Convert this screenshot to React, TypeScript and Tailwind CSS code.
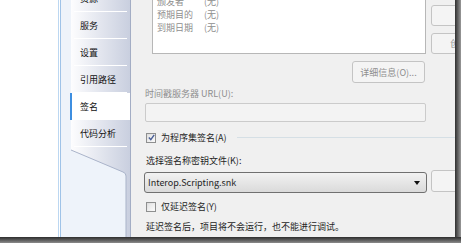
import React from "react";

function CheckBox({ checked }: { checked?: boolean }) {
  return (
    <div className="w-[10px] h-[10px] shrink-0 border border-[#8e8f8f] bg-gradient-to-br from-[#dcdcdc] to-[#fbfbfb] p-[1px] flex">
      <div className="flex-1 bg-gradient-to-br from-[#e4e4e4] to-[#f8f8f8] flex items-center justify-center">
        {checked && (
          <svg width="7" height="7" viewBox="0 0 7 7">
            <path d="M0.8 3.6 L2.8 5.6 L6.2 0.8" stroke="#4a5f97" strokeWidth="1.4" fill="none" />
          </svg>
        )}
      </div>
    </div>
  );
}

function Tab({ label }: { label: string }) {
  return (
    <div className="h-[27px] shrink-0 flex flex-col bg-gradient-to-r from-[#fdfdfe] to-[#c9cfdf]">
      <div className="flex-1 flex items-center pl-[9px] text-[#111]">{label}</div>
      <div className="h-px mx-[3px] bg-white" />
    </div>
  );
}

export default function App() {
  return (
    <div className="w-[461px] h-[243px] overflow-hidden bg-white flex flex-col font-['Noto_Sans_CJK_SC','Noto_Sans',sans-serif] text-[9px] leading-[13px]">
      <div className="h-[237px] flex shrink-0">
        <div className="w-[58px] shrink-0 bg-white" />
        {/* sidebar */}
        <div className="w-[73px] shrink-0 border-l border-[#bcd7f1] pl-px bg-white flex">
          <div className="flex-1 border-l border-r border-l-[#9fc3e8] border-r-[#a3adc4] bg-[#eef3fa] flex">
            <div className="ml-[10px] flex-1 flex flex-col -mt-[15px]">
              <Tab label="资源" />
              <Tab label="服务" />
              <Tab label="设置" />
              <Tab label="引用路径" />
              <div className="h-[27px] shrink-0 flex bg-white border-l-2 border-[#3d8ee0] -ml-px">
                <div className="flex-1 flex items-center pl-[8px] text-[#111]">签名</div>
              </div>
              <Tab label="代码分析" />
              <svg width="59" height="100" viewBox="0 0 59 100" className="shrink-0">
                <defs>
                  <linearGradient id="tg" x1="0" y1="0" x2="59" y2="0" gradientUnits="userSpaceOnUse">
                    <stop offset="0" stopColor="#fdfdfe" />
                    <stop offset="1" stopColor="#c9cfdf" />
                  </linearGradient>
                </defs>
                <path d="M0 0 H59 V100 H55 V29 Q55 26 52 25 L0 3 Z" fill="url(#tg)" />
                <path d="M0 3 L52 25 Q55 26 55 29 V100" stroke="#a9b3c9" strokeWidth="1" fill="none" />
              </svg>
            </div>
          </div>
        </div>
        {/* content */}
        <div className="w-[324px] shrink-0 bg-[#f0f0f0] overflow-hidden flex flex-col pl-[13px]">
          <div className="-mt-[20px] flex items-start shrink-0">
            <div className="ml-[8px] w-[274px] h-[74px] shrink-0 border border-[#b7b7b7] bg-white pl-[4px] pt-px text-[#8e8e8e]">
              {[
                ["颁发给", "(无)"],
                ["颁发者", "(无)"],
                ["预期目的", "(无)"],
                ["到期日期", "(无)"],
              ].map(([k, v]) => (
                <div key={k} className="flex h-[13px]">
                  <span className="w-[47px]">{k}</span>
                  <span>{v}</span>
                </div>
              ))}
            </div>
            <div className="ml-[5px] w-[112px] shrink-0 flex flex-col">
              <div className="mt-[25px] h-[21px] rounded-[3px] border border-[#c4c4c4] bg-[#f4f4f4] flex items-center justify-center text-[#8e8e8e] whitespace-nowrap">
                从文件选择(I)...
              </div>
              <div className="mt-[7px] h-[21px] rounded-[3px] border border-[#c4c4c4] bg-[#f4f4f4] flex items-center justify-center text-[#8e8e8e] whitespace-nowrap">
                创建测试证书(C)...
              </div>
            </div>
          </div>
          <div className="mt-[7px] ml-[208px] w-[73px] h-[22px] shrink-0 rounded-[3px] border border-[#c4c4c4] bg-[#f4f4f4] flex items-center justify-center text-[#8e8e8e]">
            详细信息(O)...
          </div>
          <div className="mt-[4px] ml-px h-[13px] shrink-0 text-[#8e8e8e]">时间戳服务器 URL(U):</div>
          <div className="mt-[3px] ml-px w-[281px] h-[19px] shrink-0 rounded-[2px] border border-[#cbcbcb] bg-[#f3f3f3]" />
          <div className="mt-[9px] h-[13px] shrink-0 flex items-center">
            <div className="ml-[2px]">
              <CheckBox checked />
            </div>
            <span className="ml-[5px] text-[#1e1e1e] whitespace-nowrap">为程序集签名(A)</span>
            <div className="ml-[10px] flex-1 h-px bg-[#d5dfe5]" />
          </div>
          <div className="mt-[10px] ml-[2px] h-[13px] shrink-0 text-[#1e1e1e]">选择强名称密钥文件(K):</div>
          <div className="mt-[3px] flex items-start shrink-0">
            <div className="mt-[2px] w-[283px] h-[21px] shrink-0 rounded-[3px] border border-[#707070] bg-gradient-to-b from-[#f2f2f2] to-[#dadada] flex items-center pl-[3px] pr-[6px] text-[#1e1e1e]">
              <span className="flex-1">Interop.Scripting.snk</span>
              <svg width="6" height="4" viewBox="0 0 6 4">
                <path d="M0 0 H6 L3 4 Z" fill="#111" />
              </svg>
            </div>
            <div className="ml-[4px] w-[80px] h-[22px] shrink-0 rounded-[3px] border border-[#c4c4c4] bg-[#f4f4f4]" />
          </div>
          <div className="mt-[7px] h-[13px] shrink-0 flex items-center">
            <div className="ml-[2px]">
              <CheckBox />
            </div>
            <span className="ml-[5px] text-[#1e1e1e]">仅延迟签名(Y)</span>
          </div>
          <div className="mt-[7px] ml-[2px] h-[13px] shrink-0 text-[#1e1e1e] whitespace-nowrap">
            延迟签名后，项目将不会运行，也不能进行调试。
          </div>
        </div>
        <div className="flex-1 bg-gradient-to-r from-[#303030] to-[#9a9a9a]" />
      </div>
      <div className="flex-1 bg-gradient-to-b from-[#2e2e2e] to-[#8c8c8c]" />
    </div>
  );
}
